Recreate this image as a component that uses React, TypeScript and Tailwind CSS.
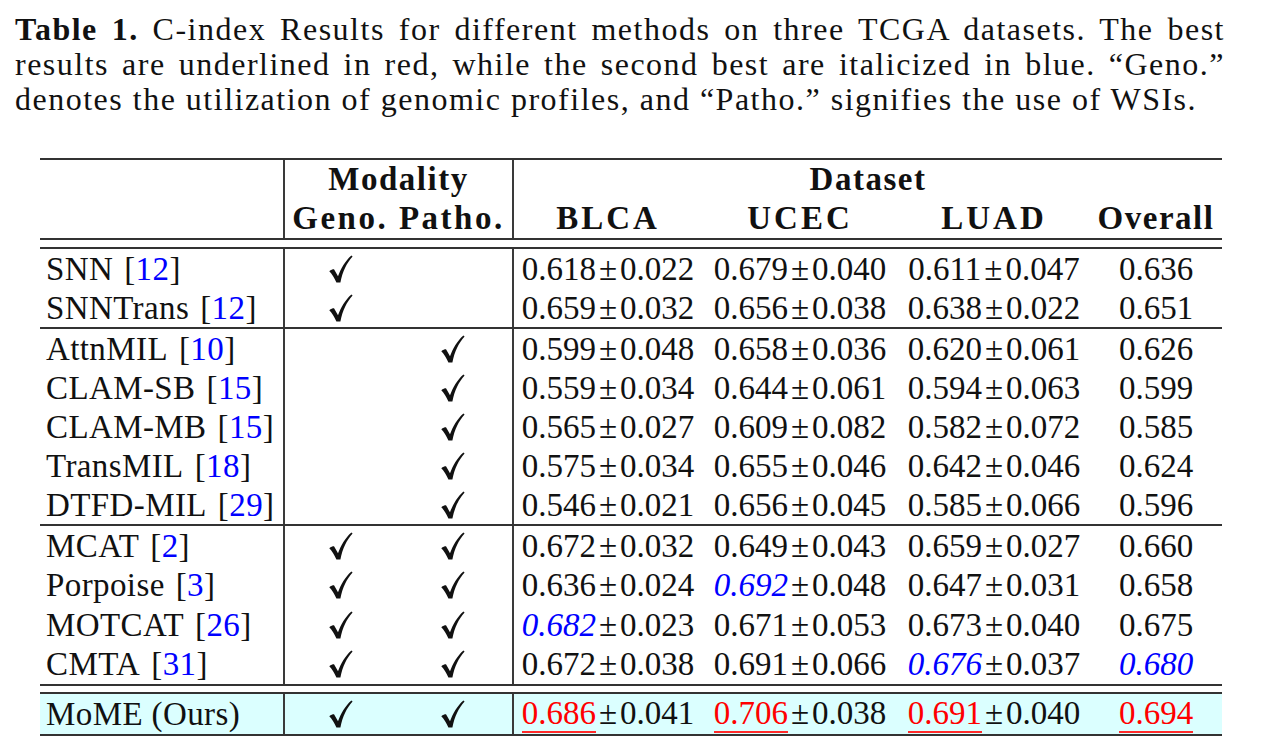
import React from "react";

type Mark = "none" | "second" | "best";
type Cell = { v: string; sd?: string; mark?: Mark };

interface Row {
  name: string;
  cite: string;
  geno: boolean;
  patho: boolean;
  cells: Cell[];
  overall: Cell;
}

const c = (v: string, sd: string, mark: Mark = "none"): Cell => ({ v, sd, mark });
const o = (v: string, mark: Mark = "none"): Cell => ({ v, mark });

const groups: Row[][] = [
  [
    { name: "SNN", cite: "12", geno: true, patho: false, cells: [c("0.618", "0.022"), c("0.679", "0.040"), c("0.611", "0.047")], overall: o("0.636") },
    { name: "SNNTrans", cite: "12", geno: true, patho: false, cells: [c("0.659", "0.032"), c("0.656", "0.038"), c("0.638", "0.022")], overall: o("0.651") },
  ],
  [
    { name: "AttnMIL", cite: "10", geno: false, patho: true, cells: [c("0.599", "0.048"), c("0.658", "0.036"), c("0.620", "0.061")], overall: o("0.626") },
    { name: "CLAM-SB", cite: "15", geno: false, patho: true, cells: [c("0.559", "0.034"), c("0.644", "0.061"), c("0.594", "0.063")], overall: o("0.599") },
    { name: "CLAM-MB", cite: "15", geno: false, patho: true, cells: [c("0.565", "0.027"), c("0.609", "0.082"), c("0.582", "0.072")], overall: o("0.585") },
    { name: "TransMIL", cite: "18", geno: false, patho: true, cells: [c("0.575", "0.034"), c("0.655", "0.046"), c("0.642", "0.046")], overall: o("0.624") },
    { name: "DTFD-MIL", cite: "29", geno: false, patho: true, cells: [c("0.546", "0.021"), c("0.656", "0.045"), c("0.585", "0.066")], overall: o("0.596") },
  ],
  [
    { name: "MCAT", cite: "2", geno: true, patho: true, cells: [c("0.672", "0.032"), c("0.649", "0.043"), c("0.659", "0.027")], overall: o("0.660") },
    { name: "Porpoise", cite: "3", geno: true, patho: true, cells: [c("0.636", "0.024"), c("0.692", "0.048", "second"), c("0.647", "0.031")], overall: o("0.658") },
    { name: "MOTCAT", cite: "26", geno: true, patho: true, cells: [c("0.682", "0.023", "second"), c("0.671", "0.053"), c("0.673", "0.040")], overall: o("0.675") },
    { name: "CMTA", cite: "31", geno: true, patho: true, cells: [c("0.672", "0.038"), c("0.691", "0.066"), c("0.676", "0.037", "second")], overall: o("0.680", "second") },
  ],
];

const ours: Row = {
  name: "MoME (Ours)",
  cite: "",
  geno: true,
  patho: true,
  cells: [c("0.686", "0.041", "best"), c("0.706", "0.038", "best"), c("0.691", "0.040", "best")],
  overall: o("0.694", "best"),
};

// \checkmark look-alike: thick short left stroke, long thin right stroke
const Check = () => (
  <svg width="24" height="28" viewBox="0 0 24 28" className="block">
    <path
      d="M0.3 16.2 C1.9 14.9 3.6 14.3 5 14.3 C6.4 16.6 7.7 19.2 9 21.2 C11.8 13.4 16.2 5.8 22.4 0.4 L23.6 1.6 C17.8 8 13.6 16.4 11.4 27.6 L7.4 27.6 C5.4 23 3 19 0.3 16.2 Z"
      fill="#111"
    />
  </svg>
);

const Num = ({ v, mark }: { v: string; mark?: Mark }) => {
  if (mark === "second") return <span className="italic text-[#0000ff]">{v}</span>;
  if (mark === "best")
    return (
      <span className="inline-block leading-[1] text-[#ff0000] border-b-2 border-[#ff2a2a] pb-[1px]">{v}</span>
    );
  return <span>{v}</span>;
};

const DataCell = ({ cell }: { cell: Cell }) => (
  <div className="text-center whitespace-nowrap">
    <Num v={cell.v} mark={cell.mark} />
    <span className="mx-[3px]">±</span>
    <span>{cell.sd}</span>
  </div>
);

const BodyRow = ({ row, h }: { row: Row; h: string }) => (
  <div className={`grid grid-cols-[243px_229px_710px] grid-rows-1 leading-[36px] ${h}`}>
    <div className="pl-[6px] flex items-center whitespace-nowrap tracking-[0.4px]">
      {row.name}
      {row.cite && (
        <span className="ml-[11px]">
          [<span className="text-[#0000ff]">{row.cite}</span>]
        </span>
      )}
    </div>
    <div className="border-l-2 border-[#3a3a3a] grid grid-cols-[112px_112px] items-center">
      <div className="flex justify-center">{row.geno && <Check />}</div>
      <div className="flex justify-center">{row.patho && <Check />}</div>
    </div>
    <div className="border-l-2 border-[#3a3a3a] grid grid-cols-[188px_196px_192px_132px] items-center">
      {row.cells.map((cell, i) => (
        <DataCell key={i} cell={cell} />
      ))}
      <div className="text-center">
        <Num v={row.overall.v} mark={row.overall.mark} />
      </div>
    </div>
  </div>
);

const rowHeights = ["h-[39px]", "h-[39px]", "h-[39.5px]"];

export default function App() {
  return (
    <div className="w-[1269px] h-[753px] bg-white overflow-hidden font-['Liberation_Serif',serif] text-[#111]">
      {/* caption */}
      <div className="ml-[15px] w-[1210px] pt-[12px] text-[32px] leading-[35px] tracking-[1.5px] whitespace-nowrap">
        <div className="text-justify [text-align-last:justify]">
          <span className="font-bold">Table 1.</span> C-index Results for different methods on three TCGA datasets. The best
        </div>
        <div className="text-justify [text-align-last:justify]">
          results are underlined in red, while the second best are italicized in blue. “Geno.”
        </div>
        <div>denotes the utilization of genomic profiles, and “Patho.” signifies the use of WSIs.</div>
      </div>

      {/* table */}
      <div className="ml-[40px] mt-[41px] w-[1182px] text-[33px]">
        <div className="border-t-2 border-b-2 border-[#333] grid grid-cols-[243px_229px_710px] h-[82px] font-bold leading-[39px]">
          <div />
          <div className="border-l-2 border-[#3a3a3a] flex flex-col">
            <div className="text-center tracking-[1.5px]">Modality</div>
            <div className="text-center tracking-[2.5px] whitespace-nowrap">Geno. Patho.</div>
          </div>
          <div className="border-l-2 border-[#3a3a3a] flex flex-col">
            <div className="text-center tracking-[1.5px]">Dataset</div>
            <div className="grid grid-cols-[188px_196px_192px_132px] text-center tracking-[3px]">
              <div>BLCA</div>
              <div>UCEC</div>
              <div>LUAD</div>
              <div className="tracking-[1.5px]">Overall</div>
            </div>
          </div>
        </div>

        <div className="h-[7px]" />

        <div className="border-t-2 border-b-2 border-[#333]">
          {groups.map((g, gi) => (
            <div key={gi} className={gi > 0 ? "border-t-2 border-[#333]" : ""}>
              {g.map((row) => (
                <BodyRow key={row.name} row={row} h={rowHeights[gi]} />
              ))}
            </div>
          ))}
        </div>

        <div className="h-[6px]" />

        <div className="border-t-2 border-b-2 border-[#333] bg-[#dbffff]">
          <BodyRow row={ours} h="h-[40px]" />
        </div>
      </div>
    </div>
  );
}
